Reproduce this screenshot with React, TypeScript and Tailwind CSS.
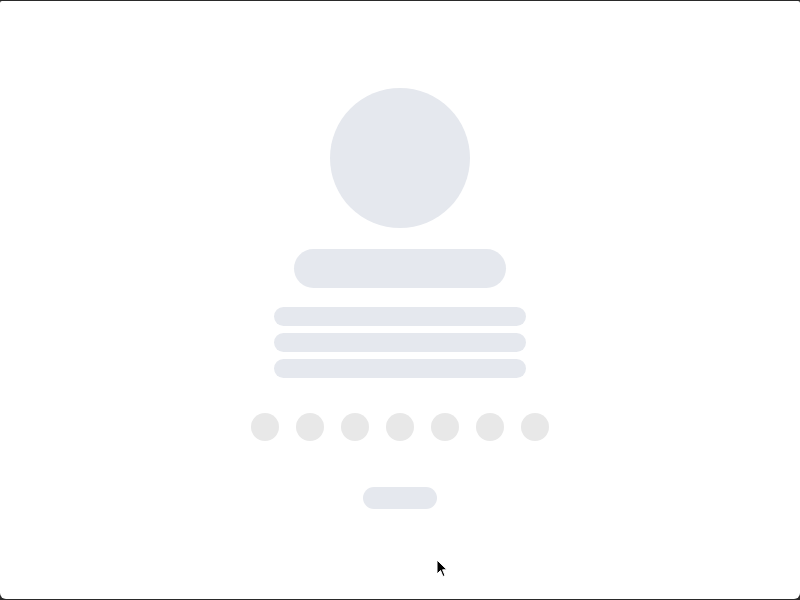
import React from 'react';

const dots = [0, 1, 2, 3, 4, 5, 6];

function Cursor() {
  return (
    <svg
      className="absolute left-[436px] top-[558px]"
      width="12"
      height="20"
      viewBox="0 0 12 20"
    >
      <path
        d="M1 1 L1 15 L4.5 11.5 L7 17.5 L9 16.6 L6.6 10.8 L11 10.8 Z"
        fill="#000"
        stroke="#fff"
        strokeWidth="1"
        strokeLinejoin="round"
      />
    </svg>
  );
}

export default function App() {
  return (
    <div className="h-[600px] w-[800px] bg-[#2a2a2a] pt-px">
      <div className="relative flex h-[598px] flex-col items-center rounded-b-[6px] rounded-t-[2px] bg-white pt-[87px]">
        <div className="h-[140px] w-[140px] rounded-full bg-[#e5e8ee]" />
        <div className="mt-[21px] h-[39px] w-[212px] rounded-full bg-[#e5e8ee]" />
        <div className="mt-[19px] flex flex-col gap-[7px]">
          <div className="h-[19px] w-[252px] rounded-full bg-[#e5e8ee]" />
          <div className="h-[19px] w-[252px] rounded-full bg-[#e5e8ee]" />
          <div className="h-[19px] w-[252px] rounded-full bg-[#e5e8ee]" />
        </div>
        <div className="mt-[35px] flex gap-[17px]">
          {dots.map((d) => (
            <div key={d} className="h-[28px] w-[28px] rounded-full bg-[#e8e8e8]" />
          ))}
        </div>
        <div className="mt-[46px] h-[22px] w-[74px] rounded-full bg-[#e5e8ee]" />
        <Cursor />
      </div>
    </div>
  );
}
